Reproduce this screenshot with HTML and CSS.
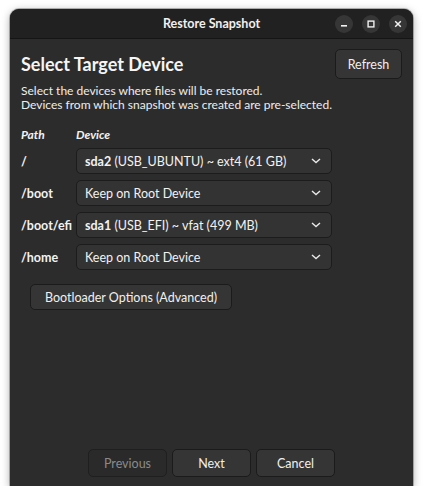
FILE: index.html
```html
<!DOCTYPE html>
<html>
<head>
<meta charset="utf-8">
<link rel="stylesheet" href="styles.css">
</head>
<body>
<div class="window">
  <div class="headerbar">
    <div class="hb-spacer"></div>
    <div class="hb-title">Restore Snapshot</div>
    <div class="hb-controls">
      <span class="wc"><svg width="18" height="18" viewBox="0 0 18 18"><rect x="6" y="10" width="6" height="1.6" fill="#f2f2f2"/></svg></span>
      <span class="wc"><svg width="18" height="18" viewBox="0 0 18 18"><rect x="6.1" y="6.1" width="5.8" height="5.8" fill="none" stroke="#f2f2f2" stroke-width="1.4"/></svg></span>
      <span class="wc"><svg width="18" height="18" viewBox="0 0 18 18"><path d="M6.2 6.2 L11.8 11.8 M11.8 6.2 L6.2 11.8" stroke="#f2f2f2" stroke-width="1.5" fill="none"/></svg></span>
    </div>
  </div>
  <div class="content">
    <div class="title-row">
      <h1 class="page-title">Select Target Device</h1>
      <button class="btn refresh">Refresh</button>
    </div>
    <p class="desc">Select the devices where files will be restored.<br>Devices from which snapshot was created are pre-selected.</p>
    <div class="grid">
      <div class="col-head">Path</div>
      <div class="col-head">Device</div>

      <div class="path">/</div>
      <div class="combo"><span><b>sda2</b> (USB_UBUNTU) ~ ext4 (61 GB)</span><svg class="chev" width="10" height="6" viewBox="0 0 10 6"><path d="M1 1 L5 4.6 L9 1" stroke="#e8e8e8" stroke-width="1.4" fill="none"/></svg></div>

      <div class="path">/boot</div>
      <div class="combo"><span>Keep on Root Device</span><svg class="chev" width="10" height="6" viewBox="0 0 10 6"><path d="M1 1 L5 4.6 L9 1" stroke="#e8e8e8" stroke-width="1.4" fill="none"/></svg></div>

      <div class="path">/boot/efi</div>
      <div class="combo"><span><b>sda1</b> (USB_EFI) ~ vfat (499 MB)</span><svg class="chev" width="10" height="6" viewBox="0 0 10 6"><path d="M1 1 L5 4.6 L9 1" stroke="#e8e8e8" stroke-width="1.4" fill="none"/></svg></div>

      <div class="path">/home</div>
      <div class="combo"><span>Keep on Root Device</span><svg class="chev" width="10" height="6" viewBox="0 0 10 6"><path d="M1 1 L5 4.6 L9 1" stroke="#e8e8e8" stroke-width="1.4" fill="none"/></svg></div>
    </div>
    <div class="boot-row">
      <button class="btn bootloader">Bootloader Options (Advanced)</button>
    </div>
    <div class="actions">
      <button class="btn action disabled">Previous</button>
      <button class="btn action">Next</button>
      <button class="btn action">Cancel</button>
    </div>
  </div>
</div>
</body>
</html>
```

FILE: styles.css
```css
* { box-sizing: border-box; }
html, body { margin: 0; padding: 0; background: #ffffff; }
body {
  font-family: "Lato", "Noto Sans", sans-serif;
  font-size: 12px;
  color: #f2f2f2;
}
.window {
  margin: 9px 0 0 10px;
  width: 403px;
  height: 477px;
  background: #2c2c2c;
  border-radius: 9px 9px 0 0;
  box-shadow: 0 2px 8px rgba(0,0,0,0.35), 0 0 0 1px rgba(0,0,0,0.25);
  display: flex;
  flex-direction: column;
  overflow: hidden;
}
.headerbar {
  height: 30px;
  flex: none;
  background: #212121;
  border-bottom: 1px solid #151515;
  display: grid;
  grid-template-columns: 1fr auto 1fr;
  align-items: center;
}
.hb-title {
  font-weight: bold;
  font-size: 12.5px;
  color: #f0f0f0;
}
.hb-controls {
  justify-self: end;
  display: flex;
  gap: 9px;
  padding-right: 6px;
}
.wc {
  width: 18px;
  height: 18px;
  border-radius: 50%;
  background: #363636;
  display: flex;
}
.content {
  flex: 1;
  display: flex;
  flex-direction: column;
  padding: 10px 11px 9px 11px;
}
.title-row {
  display: flex;
  justify-content: space-between;
  align-items: flex-start;
}
.page-title {
  margin: 3px 0 0 0;
  font-size: 18px;
  font-weight: bold;
  line-height: 24px;
  color: #f5f5f5;
}
.btn {
  font-family: inherit;
  font-size: 12.5px;
  color: #f0f0f0;
  background: #353535;
  border: 1px solid #1b1b1b;
  border-radius: 5px;
  padding: 0;
  cursor: default;
}
.refresh {
  width: 67px;
  height: 30px;
}
.desc {
  margin: 5px 0 0 0;
  line-height: 14px;
  color: #eeeeee;
}
.grid {
  margin-top: 16px;
  display: grid;
  grid-template-columns: 55px 256px;
  grid-template-rows: 14px;
  grid-auto-rows: 26px;
  row-gap: 6px;
  align-items: center;
}
.grid .col-head {
  font-weight: bold;
  font-style: italic;
  line-height: 14px;
}
.path {
  font-weight: bold;
  font-size: 12.5px;
}
.combo {
  height: 26px;
  font-size: 12.5px;
  background: #333333;
  border: 1px solid #1c1c1c;
  border-radius: 5px;
  display: flex;
  align-items: center;
  justify-content: space-between;
  padding: 0 10px 0 8px;
}
.chev { flex: none; }
.boot-row {
  margin-top: 14px;
  padding-left: 9px;
}
.bootloader {
  width: 202px;
  height: 26px;
}
.actions {
  margin-top: auto;
  display: flex;
  justify-content: center;
  gap: 5px;
}
.action {
  width: 79px;
  height: 28px;
}
.disabled {
  background: #2a2a2a;
  color: #8a8a8a;
  border-color: #1f1f1f;
}
```
